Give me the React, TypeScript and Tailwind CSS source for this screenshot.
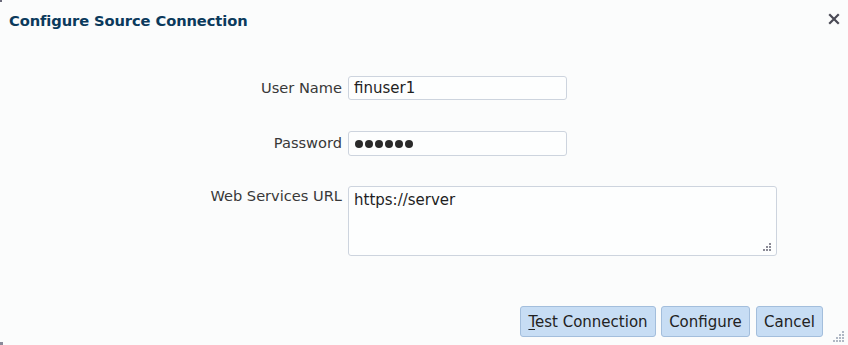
import React from "react";

const labelFont = { fontFamily: '"DejaVu Sans", Verdana, sans-serif' };

export default function App() {
  return (
    <div className="relative w-[848px] h-[345px] bg-[#fbfcfc] overflow-hidden flex flex-col" style={labelFont}>
      <div className="absolute left-0 top-0 w-[2px] h-[2px] bg-[#6a6a7a]" />
      <div className="absolute left-0 bottom-0 w-[3px] h-[3px] bg-[#8a8a9a]" />
      <div className="flex items-start justify-between pl-[9px] pr-[8px] pt-[10px] h-[40px]">
        <h1 className="text-[14.7px] leading-[22px] font-bold text-[#0b3a5c] tracking-[-0.1px]">
          Configure Source Connection
        </h1>
        <svg width="12" height="12" viewBox="0 0 12 12" className="mt-[3px]">
          <path d="M2 2 L10 10 M10 2 L2 10" stroke="#4a4a55" strokeWidth="2.2" strokeLinecap="square" />
        </svg>
      </div>
      <div className="grid grid-cols-[342px_auto] gap-x-[6px] mt-[36px] items-start">
        <div className="text-right text-[14.6px] leading-[23px] text-[#383838] h-[23px]">User Name</div>
        <div className="w-[219px] h-[24px] border border-[#cdd4de] rounded-[3px] bg-[#fdfefe] flex items-center pl-[5px] text-[15px] text-[#1f1f1f]">
          finuser1
        </div>
        <div className="col-span-2 h-[31px]" />
        <div className="text-right text-[14.6px] leading-[24px] text-[#383838] h-[24px]">Password</div>
        <div className="w-[219px] h-[25px] border border-[#cdd4de] rounded-[3px] bg-[#fdfefe] flex items-center pl-[6px] gap-[2px]">
          {[0, 1, 2, 3, 4, 5].map((i) => (
            <span key={i} className="w-[8px] h-[8px] rounded-full bg-[#2a2a2a]" />
          ))}
        </div>
        <div className="col-span-2 h-[30px]" />
        <div className="text-right text-[14.6px] leading-[18px] pt-[1px] text-[#383838]">Web Services URL</div>
        <div className="relative w-[429px] h-[70px] border border-[#cdd4de] rounded-[3px] bg-[#fdfefe] pl-[5px] pt-[3px] text-[15px] leading-[20px] text-[#1f1f1f]">
          https://server
          <svg width="9" height="9" viewBox="0 0 9 9" className="absolute right-[4px] bottom-[3px]">
            <rect x="6" y="0" width="2" height="2" fill="#8a8a95" />
            <rect x="3" y="3" width="2" height="2" fill="#8a8a95" />
            <rect x="6" y="3" width="2" height="2" fill="#8a8a95" />
            <rect x="0" y="6" width="2" height="2" fill="#8a8a95" />
            <rect x="3" y="6" width="2" height="2" fill="#8a8a95" />
            <rect x="6" y="6" width="2" height="2" fill="#8a8a95" />
          </svg>
        </div>
      </div>
      <div className="flex justify-end pr-[25px] mt-[50px]">
        <button className="w-[136px] h-[31px] pt-[2px] border border-[#a3bedc] rounded-[3px] bg-[#c7ddf4] text-[15px] text-[#222]">
          <span className="underline underline-offset-2">T</span>est Connection
        </button>
        <button className="ml-[5px] w-[89px] h-[31px] pt-[2px] border border-[#a3bedc] rounded-[3px] bg-[#c7ddf4] text-[15px] text-[#222]">
          Configure
        </button>
        <button className="ml-[6px] w-[67px] h-[31px] pt-[2px] border border-[#a3bedc] rounded-[3px] bg-[#c7ddf4] text-[15px] text-[#222]">
          Cancel
        </button>
      </div>
      <svg width="12" height="12" viewBox="0 0 12 12" className="absolute right-[3px] bottom-[2px]">
        {[
          [9, 0], [6, 3], [9, 3], [3, 6], [6, 6], [9, 6], [0, 9], [3, 9], [6, 9], [9, 9],
        ].map(([x, y], i) => (
          <rect key={i} x={x} y={y} width="2" height="2" fill="#b0b8c4" />
        ))}
      </svg>
    </div>
  );
}
